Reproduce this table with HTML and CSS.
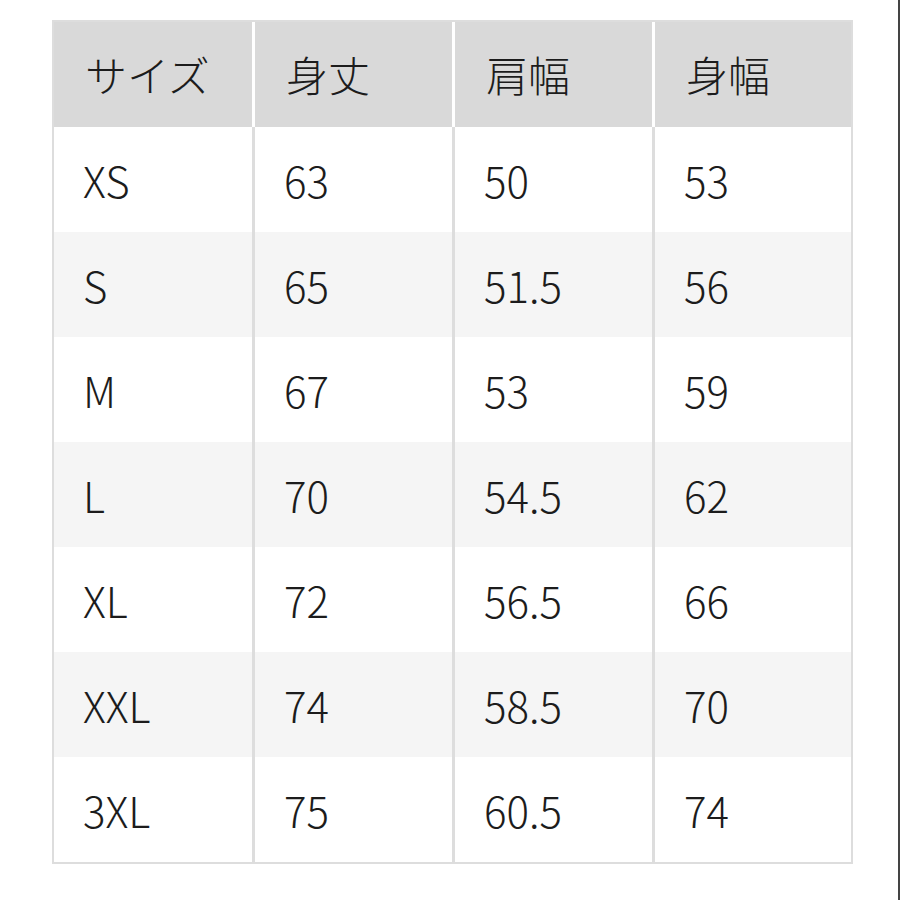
FILE: index.html
```html
<!DOCTYPE html>
<html lang="ja">
<head>
<meta charset="utf-8">
<link rel="stylesheet" href="styles.css">
</head>
<body>
<div class="page">
  <div class="table">
    <div class="row head">
      <div class="cell">サイズ</div>
      <div class="cell">身丈</div>
      <div class="cell">肩幅</div>
      <div class="cell">身幅</div>
    </div>
    <div class="row body">
      <div class="cell">XS</div><div class="cell">63</div><div class="cell">50</div><div class="cell">53</div>
    </div>
    <div class="row body alt">
      <div class="cell">S</div><div class="cell">65</div><div class="cell">51.5</div><div class="cell">56</div>
    </div>
    <div class="row body">
      <div class="cell">M</div><div class="cell">67</div><div class="cell">53</div><div class="cell">59</div>
    </div>
    <div class="row body alt">
      <div class="cell">L</div><div class="cell">70</div><div class="cell">54.5</div><div class="cell">62</div>
    </div>
    <div class="row body">
      <div class="cell">XL</div><div class="cell">72</div><div class="cell">56.5</div><div class="cell">66</div>
    </div>
    <div class="row body alt">
      <div class="cell">XXL</div><div class="cell">74</div><div class="cell">58.5</div><div class="cell">70</div>
    </div>
    <div class="row body">
      <div class="cell">3XL</div><div class="cell">75</div><div class="cell">60.5</div><div class="cell">74</div>
    </div>
  </div>
</div>
</body>
</html>
```

FILE: styles.css
```css
html, body {
  margin: 0;
  padding: 0;
  background: #ffffff;
}

.page {
  box-sizing: border-box;
  width: 900px;
  height: 900px;
  padding: 20px 0 0 52px;
  border-right: 2px solid #444444;
  background: #ffffff;
  font-family: "Noto Sans CJK JP", "Liberation Sans", sans-serif;
  font-weight: 300;
  color: #1c1c1c;
}

.table {
  width: 801px;
  box-sizing: border-box;
  border: 2px solid #dddddd;
}

.row {
  display: grid;
  grid-template-columns: 198px 197px 197px 196px;
  column-gap: 3px;
}

.row.head {
  height: 105px;
  background: #ffffff;
}

.row.body {
  height: 105px;
  background: #dddddd;
}

.cell {
  display: flex;
  align-items: center;
  padding-left: 29px;
  font-size: 42px;
  line-height: 1;
  background: #ffffff;
}

.head .cell {
  background: #d9d9d9;
  padding-left: 31px;
  padding-bottom: 2px;
}

.alt .cell {
  background: #f5f5f5;
}
```
